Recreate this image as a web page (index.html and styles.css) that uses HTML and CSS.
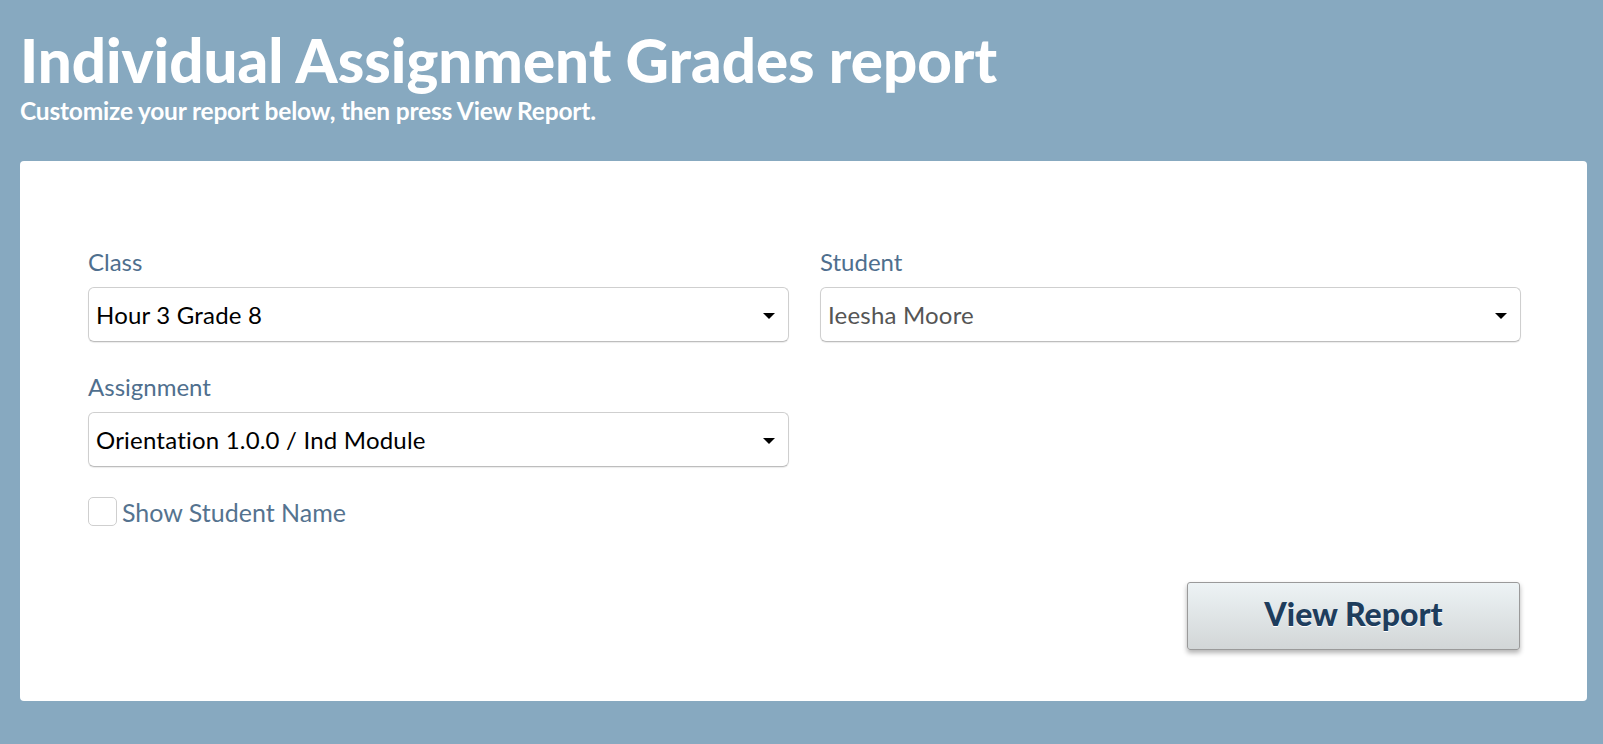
FILE: index.html
```html
<!DOCTYPE html>
<html lang="en">
<head>
<meta charset="utf-8">
<title>Individual Assignment Grades report</title>
<link rel="stylesheet" href="styles.css">
</head>
<body>
<header class="page-header">
  <h1 class="page-title">Individual Assignment Grades report</h1>
  <p class="page-subtitle">Customize your report below, then press View Report.</p>
</header>
<main class="card">
  <div class="fields">
    <div class="field">
      <label class="field-label">Class</label>
      <div class="select">
        <span class="select-value">Hour 3 Grade 8</span>
        <span class="select-arrow"></span>
      </div>
    </div>
    <div class="field">
      <label class="field-label">Student</label>
      <div class="select">
        <span class="select-value select-value--muted">Ieesha Moore</span>
        <span class="select-arrow"></span>
      </div>
    </div>
    <div class="field">
      <label class="field-label">Assignment</label>
      <div class="select">
        <span class="select-value">Orientation 1.0.0 / Ind Module</span>
        <span class="select-arrow"></span>
      </div>
    </div>
  </div>
  <label class="checkbox-row">
    <span class="checkbox"></span>
    <span class="checkbox-text">Show Student Name</span>
  </label>
  <div class="actions">
    <button class="btn" type="button">View Report</button>
  </div>
</main>
</body>
</html>
```
FILE: styles.css
```css
* { box-sizing: border-box; }
html, body { margin: 0; padding: 0; }
body {
  background: #87a9c0;
  font-family: Lato, "Open Sans", "Liberation Sans", sans-serif;
  min-height: 744px;
  overflow: hidden;
}
.page-header {
  height: 161px;
  padding: 30px 20px 0 20px;
  color: #fff;
}
.page-title {
  margin: 0;
  font-size: 60px;
  line-height: 60px;
  font-weight: 900;
  letter-spacing: 0;
}
.page-subtitle {
  margin: 8px 0 0 0;
  font-size: 24.5px;
  line-height: 26px;
  font-weight: 700;
  letter-spacing: -0.2px;
}
.card {
  display: block;
  margin: 0 0 0 20px;
  width: 1567px;
  height: 540px;
  background: #fff;
  border-radius: 4px;
  padding: 87px 66px 51px 68px;
}
.fields {
  display: grid;
  grid-template-columns: 701px 701px;
  column-gap: 31px;
  row-gap: 31px;
}
.field { display: flex; flex-direction: column; }
.field-label {
  font-size: 24px;
  line-height: 28px;
  color: #4f6f8e;
  margin-bottom: 11px;
}
.select {
  height: 55px;
  border: 1px solid #cfcfcf;
  border-bottom-color: #bdbdbd;
  border-radius: 6px;
  box-shadow: 0 1px 1px rgba(0,0,0,0.08);
  display: flex;
  align-items: center;
  justify-content: space-between;
  padding: 0 13px 0 7px;
}
.select-value {
  font-size: 24px;
  color: #000;
  letter-spacing: 0.2px;
}
.select-value--muted { color: #555; }
.select-arrow {
  width: 0;
  height: 0;
  border-left: 6px solid transparent;
  border-right: 6px solid transparent;
  border-top: 6px solid #000;
  margin-top: 2px;
}
.checkbox-row {
  display: flex;
  align-items: center;
  margin-top: 30px;
  height: 29px;
}
.checkbox {
  width: 29px;
  height: 29px;
  border: 1px solid #cfcfcf;
  border-radius: 5px;
  background: #fff;
  margin-right: 5px;
}
.checkbox-text {
  font-size: 25px;
  color: #55738f;
}
.actions {
  display: flex;
  justify-content: flex-end;
  margin-top: 56px;
  padding-right: 1px;
}
.btn {
  width: 333px;
  height: 68px;
  border: 1px solid #9a9a9a;
  border-radius: 3px;
  background: linear-gradient(#edf3f5, #d2d6d7);
  box-shadow: 0 3px 5px rgba(0,0,0,0.3);
  font-family: Lato, "Open Sans", sans-serif;
  font-size: 32px;
  font-weight: 900;
  color: #1e3d5d;
  text-shadow: 0 1px 0 #fff;
  padding: 0 0 6px 0;
  cursor: pointer;
}
```
